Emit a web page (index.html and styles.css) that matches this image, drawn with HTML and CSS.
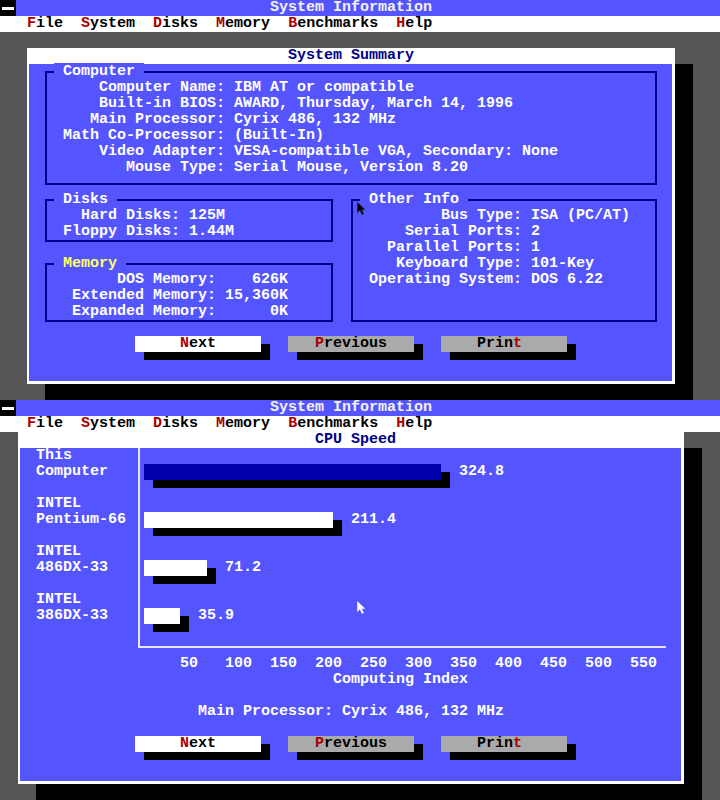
FILE: index.html
```html
<!DOCTYPE html>
<html>
<head>
<meta charset="utf-8">
<title>System Information</title>
<link rel="stylesheet" href="styles.css">
</head>
<body>
<div class="screen">
  <div class="titlebar"><span class="sysmenu"><span class="sysbar"></span></span><span class="apptitle">System Information</span></div>
  <div class="menubar"><span class="hk">F</span>ile  <span class="hk">S</span>ystem  <span class="hk">D</span>isks  <span class="hk">M</span>emory  <span class="hk">B</span>enchmarks  <span class="hk">H</span>elp</div>
  <div class="desktop">
    <div class="window win1">
      <div class="wtitle t1">System Summary</div>
      <div class="wbody b1">
        <section class="box computer">
          <div class="legend"><span> Computer </span></div>
          <dl class="fields f-computer">
            <dt>Computer Name:</dt><dd>IBM AT or compatible</dd>
            <dt>Built-in BIOS:</dt><dd>AWARD, Thursday, March 14, 1996</dd>
            <dt>Main Processor:</dt><dd>Cyrix 486, 132 MHz</dd>
            <dt>Math Co-Processor:</dt><dd>(Built-In)</dd>
            <dt>Video Adapter:</dt><dd>VESA-compatible VGA, Secondary: None</dd>
            <dt>Mouse Type:</dt><dd>Serial Mouse, Version 8.20</dd>
          </dl>
        </section>
        <div class="lower">
          <section class="box disks">
            <div class="legend"><span> Disks </span></div>
            <dl class="fields f-disks">
              <dt>Hard Disks:</dt><dd>125M</dd>
              <dt>Floppy Disks:</dt><dd>1.44M</dd>
            </dl>
          </section>
          <section class="box other">
            <div class="legend"><span> Other Info </span></div>
            <dl class="fields f-other">
              <dt>Bus Type:</dt><dd>ISA (PC/AT)</dd>
              <dt>Serial Ports:</dt><dd>2</dd>
              <dt>Parallel Ports:</dt><dd>1</dd>
              <dt>Keyboard Type:</dt><dd>101-Key</dd>
              <dt>Operating System:</dt><dd>DOS 6.22</dd>
            </dl>
          </section>
          <section class="box memory">
            <div class="legend legend-active"><span> Memory </span></div>
            <dl class="fields f-memory">
              <dt>DOS Memory:</dt><dd>626K</dd>
              <dt>Extended Memory:</dt><dd>15,360K</dd>
              <dt>Expanded Memory:</dt><dd>0K</dd>
            </dl>
          </section>
        </div>
        <div class="buttons b1-buttons">
          <div class="btn btn-primary"><span class="hk">N</span>ext</div>
          <div class="btn btn-secondary"><span class="hk">P</span>revious</div>
          <div class="btn btn-secondary btn-print">Prin<span class="hk">t</span></div>
        </div>
      </div>
    </div>
  </div>
  <svg class="cursor cursor-dark" width="9" height="13" viewBox="0 0 9 13"><polygon points="0.5,0.5 0.5,10.5 3,8 5,12.5 6.5,11.8 4.6,7.5 7.8,7.5" fill="#000" stroke="#222" stroke-width="1"/></svg>
</div>

<div class="screen">
  <div class="titlebar"><span class="sysmenu"><span class="sysbar"></span></span><span class="apptitle">System Information</span></div>
  <div class="menubar"><span class="hk">F</span>ile  <span class="hk">S</span>ystem  <span class="hk">D</span>isks  <span class="hk">M</span>emory  <span class="hk">B</span>enchmarks  <span class="hk">H</span>elp</div>
  <div class="desktop">
    <div class="window win2">
      <div class="wtitle t2">CPU Speed</div>
      <div class="wbody b2">
        <div class="chart">
          <div class="series-labels">
            <div class="series-label">This
Computer</div>
            <div class="series-label">INTEL
Pentium-66</div>
            <div class="series-label">INTEL
486DX-33</div>
            <div class="series-label">INTEL
386DX-33</div>
          </div>
          <div class="plot">
            <div class="series"><div class="bar bar-this" style="width:297px"></div><span class="value">324.8</span></div>
            <div class="series"><div class="bar bar-ref" style="width:189px"></div><span class="value">211.4</span></div>
            <div class="series"><div class="bar bar-ref" style="width:63px"></div><span class="value">71.2</span></div>
            <div class="series"><div class="bar bar-ref" style="width:36px"></div><span class="value">35.9</span></div>
          </div>
        </div>
        <div class="ticks"><span>50</span><span>100</span><span>150</span><span>200</span><span>250</span><span>300</span><span>350</span><span>400</span><span>450</span><span>500</span><span>550</span></div>
        <div class="axis-title">Computing Index</div>
        <div class="cpu-line">Main Processor: Cyrix 486, 132 MHz</div>
        <div class="buttons b2-buttons">
          <div class="btn btn-primary"><span class="hk">N</span>ext</div>
          <div class="btn btn-secondary"><span class="hk">P</span>revious</div>
          <div class="btn btn-secondary btn-print">Prin<span class="hk">t</span></div>
        </div>
      </div>
    </div>
  </div>
  <svg class="cursor cursor-light" width="9" height="13" viewBox="0 0 9 13"><polygon points="0.5,0.5 0.5,10.5 3,8 5,12.5 6.5,11.8 4.6,7.5 7.8,7.5" fill="#fff" stroke="#eee" stroke-width="0.6"/></svg>
</div>
</body>
</html>
```

FILE: styles.css
```css
* { box-sizing: border-box; }

html, body {
  margin: 0;
  padding: 0;
}

body {
  width: 720px;
  background: #555555;
  font-family: "Liberation Mono", "DejaVu Sans Mono", monospace;
  font-size: 15px;
  line-height: 16px;
  font-weight: bold;
  color: #ffffff;
}

.screen {
  position: relative;
  width: 720px;
  height: 400px;
  background: #555555;
  overflow: hidden;
}

.titlebar {
  display: flex;
  height: 16px;
  background: #5555ff;
}

.sysmenu {
  display: flex;
  align-items: center;
  justify-content: center;
  width: 16px;
  height: 16px;
  background: #000000;
}

.sysbar {
  width: 12px;
  height: 3px;
  background: #ffffff;
}

.apptitle {
  margin-left: 254px;
  white-space: pre;
  color: #f2f2f2;
}

.menubar {
  height: 16px;
  padding-left: 27px;
  background: #ffffff;
  color: #000000;
  white-space: pre;
}

.hk { color: #aa0000; }

.desktop { height: 368px; }

.window {
  display: flex;
  flex-direction: column;
  padding: 0 3px 3px 2px;
  background: #ffffff;
  box-shadow: 18px 16px 0 #000000;
}

.win1 {
  width: 648px;
  height: 336px;
  margin: 16px 0 0 27px;
}

.win2 {
  width: 666px;
  height: 352px;
  margin: 0 0 0 18px;
}

.wtitle {
  height: 16px;
  color: #000088;
  white-space: pre;
}

.t1 { padding-left: 259px; }
.t2 { padding-left: 295px; }

.wbody {
  flex: 1;
  padding-left: 16px;
  background: #5555ff;
}

.b1 { padding-top: 7px; }

/* framed groups */
.box {
  border: 2px solid #000088;
  padding-left: 7px;
}

.legend {
  height: 16px;
  margin-top: -9px;
  white-space: pre;
}

.legend span { background: #5555ff; }
.legend-active { color: #ffff66; }

.computer {
  width: 612px;
  padding-bottom: 7px;
}

.fields {
  display: grid;
  column-gap: 9px;
  margin: 0;
  padding: 0;
}

.fields dt,
.fields dd {
  margin: 0;
  white-space: pre;
}

.fields dt { text-align: right; }

.f-computer { grid-template-columns: 171px auto; }
.f-disks    { grid-template-columns: 126px auto; }
.f-other    { grid-template-columns: 162px auto; }
.f-memory   { grid-template-columns: 162px 63px; }
.f-memory dd { text-align: right; }

.lower {
  display: grid;
  grid-template-columns: 288px 306px;
  grid-template-rows: auto auto;
  column-gap: 18px;
  row-gap: 21px;
  margin-top: 14px;
}

.disks  { grid-column: 1; grid-row: 1; }
.memory { grid-column: 1; grid-row: 2; }
.other  { grid-column: 2; grid-row: 1 / span 2; }

/* buttons */
.buttons {
  display: flex;
  gap: 27px;
}

.b1-buttons { margin: 14px 0 0 90px; }
.b2-buttons { margin: 16px 0 0 99px; }

.btn {
  width: 126px;
  height: 16px;
  color: #000000;
  text-align: center;
  white-space: pre;
  box-shadow: 9px 8px 0 #000000;
}

.btn-primary   { background: #ffffff; }
.btn-secondary { background: #aaaaaa; }
.btn-print     { padding-right: 9px; }

/* chart */
.chart { display: flex; }

.series-labels { width: 102px; }

.series-label {
  height: 48px;
  white-space: pre;
}

.plot {
  width: 528px;
  padding: 0 0 6px 4px;
  border-left: 2px solid #e6e6ff;
  border-bottom: 2px solid #e6e6ff;
}

.series {
  display: flex;
  align-items: flex-start;
  height: 48px;
  padding-top: 16px;
}

.bar {
  height: 16px;
  box-shadow: 9px 8px 0 #000000;
}

.bar-this { background: #0000aa; }
.bar-ref  { background: #ffffff; }

.value {
  margin-left: 18px;
  white-space: pre;
}

.ticks {
  display: flex;
  margin: 8px 0 0 144px;
}

.ticks span { width: 45px; }

.axis-title { margin-left: 297px; }

.cpu-line {
  margin: 16px 0 0 162px;
  white-space: pre;
}

/* mouse pointer overlay */
.cursor {
  position: absolute;
  left: 357px;
}

.cursor-dark  { top: 202px; }
.cursor-light { top: 201px; }
```
